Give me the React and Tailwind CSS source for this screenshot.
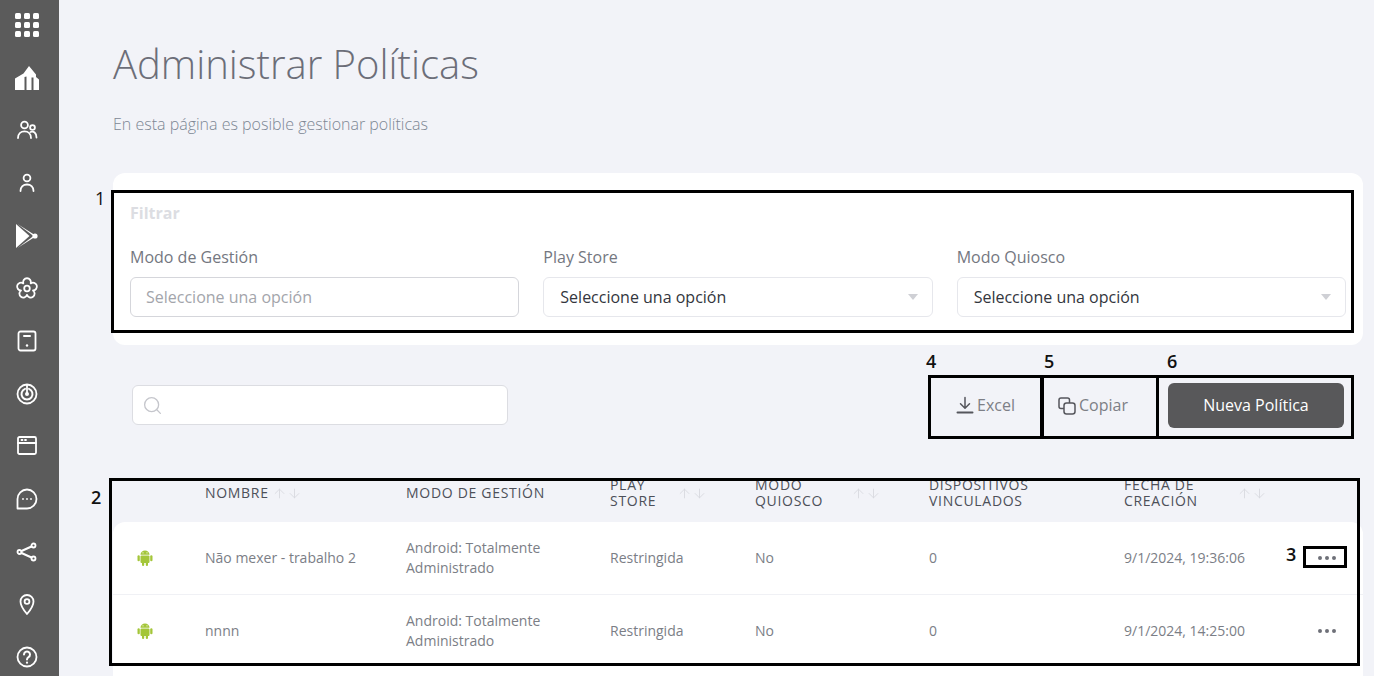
import { Search, ArrowUp, ArrowDown, MoreHorizontal } from 'lucide-react';

const gridCols = 'grid grid-cols-[92px_201px_204px_145px_174px_195px_1fr_60px]';

function IconBox({ children }) {
    return (
        <svg width="24" height="24" viewBox="0 0 24 24" fill="none" stroke="white" strokeWidth="1.8" strokeLinecap="round" strokeLinejoin="round">
            {children}
        </svg>
    );
}

function SideNav() {
    return (
        <aside className="w-[59px] h-full shrink-0 bg-[#5b5b5b] flex flex-col items-center justify-between pt-[13px] pb-[7px] pr-[5px]">
            {/* apps */}
            <svg width="24" height="24" viewBox="0 0 24 24" fill="white">
                {[0, 9, 18].map((y) => [0, 9, 18].map((x) => (
                    <rect key={`${x}-${y}`} x={x} y={y} width="6" height="6" rx="1.5" />
                )))}
            </svg>
            {/* buildings */}
            <svg width="24" height="24" viewBox="0 0 24 24" fill="white" fillRule="evenodd">
                <path d="M0 24V12.500L8.500 7.500L14 0L21 8.500V11L24 13.500V24H0ZM9.500 11V24H11.500V10.500L9.500 11ZM16.500 11.500V24H18.500V11.500H16.500Z" />
            </svg>
            <IconBox>
                <circle cx="9.500" cy="7" r="3.400" />
                <circle cx="17.500" cy="9.500" r="2.400" />
                <path d="M3 20c0-4 2.800-6.700 6.500-6.700S16 16 16 20" />
                <path d="M15.500 14c3-1.300 6 .8 6 5.500" />
            </IconBox>
            <IconBox>
                <circle cx="12" cy="7" r="3.400" />
                <path d="M5.500 20c0-4 2.800-6.500 6.500-6.500s6.500 2.500 6.500 6.500" />
            </IconBox>
            {/* play store */}
            <svg width="24" height="24" viewBox="0 0 24 24" fill="white">
                <path d="M1 0L14.500 12L1 24V0Z" />
                <path d="M2.500 0L19 10.500L17.800 11.500L2.500 0Z" />
                <path d="M2.500 24L19 13.500L17.800 12.500L2.500 24Z" />
                <circle cx="20" cy="12" r="2.600" />
            </svg>
            {/* settings flower */}
            <IconBox>
                <path d="M8.300 7.400A3.900 3.900 0 1 1 15.700 7.400A3.900 3.900 0 1 1 17.990 14.450A3.900 3.900 0 1 1 12 18.800A3.900 3.900 0 1 1 6.010 14.450A3.900 3.900 0 1 1 8.300 7.400Z" />
                <circle cx="12" cy="12.500" r="2.800" />
            </IconBox>
            {/* device */}
            <IconBox>
                <rect x="3.500" y="2.500" width="17" height="19" rx="2" />
                <path d="M9 7h6" strokeWidth="2" />
                <circle cx="12" cy="16.500" r="1.200" fill="white" stroke="none" />
            </IconBox>
            {/* radar */}
            <IconBox>
                <circle cx="12" cy="12" r="9.500" />
                <path d="M10 6.900a5.500 5.500 0 1 0 4 0" strokeWidth="2" />
                <path d="M12 3v9" strokeWidth="1.800" />
                <circle cx="12" cy="12" r="2" fill="white" stroke="none" />
            </IconBox>
            <IconBox>
                <rect x="3" y="3" width="18" height="17" rx="1.500" />
                <path d="M3 9h18" />
                <path d="M6.500 6h1M10 6h1" />
            </IconBox>
            <IconBox>
                <path d="M2.500 21.500V12a9.500 9.500 0 1 1 9.500 9.500H2.500Z" />
                <path d="M8 12h.01M12 12h.01M16 12h.01" />
            </IconBox>
            <IconBox>
                <circle cx="18.500" cy="5.500" r="2" />
                <circle cx="4.500" cy="12" r="2" />
                <circle cx="18.500" cy="18.500" r="2" />
                <path d="M6.500 11 16.500 6.500M6.500 13l10 4.500" strokeWidth="2" />
            </IconBox>
            <IconBox>
                <path d="M12 22C8.500 18 5.500 14.500 5.500 9.500a6.500 6.500 0 0 1 13 0c0 5-3 8.500-6.500 12.500Z" />
                <circle cx="12" cy="9.500" r="2.400" />
            </IconBox>
            <IconBox>
                <circle cx="12" cy="12" r="9.500" />
                <path d="M9 9.500a3 3 0 1 1 4.500 2.600c-1 .6-1.500 1.200-1.500 2.400" strokeWidth="2" />
                <path d="M12 17.700h.01" strokeWidth="2.200" />
            </IconBox>
        </aside>
    );
}

function AndroidIcon() {
    return (
        <svg width="16" height="17" viewBox="0 0 16 17" fill="#a4c639" className="-mt-[2px]">
            <path d="M3.500 5.800C3.500 3.300 5.500 1.500 8 1.500s4.500 1.800 4.500 4.300H3.500Z" />
            <rect x="3.500" y="6.500" width="9" height="7.500" rx="1" />
            <rect x="0.500" y="6.300" width="2.300" height="6" rx="1.150" />
            <rect x="13.200" y="6.300" width="2.300" height="6" rx="1.150" />
            <rect x="5" y="12" width="2.200" height="5" rx="1.100" />
            <rect x="8.800" y="12" width="2.200" height="5" rx="1.100" />
            <circle cx="6" cy="3.800" r="0.600" fill="white" />
            <circle cx="10" cy="3.800" r="0.600" fill="white" />
        </svg>
    );
}

function DownloadIcon() {
    return (
        <svg width="18" height="20" viewBox="0 0 18 20" fill="none" stroke="#55565c" strokeWidth="1.500" strokeLinecap="round" strokeLinejoin="round">
            <path d="M9 2.500V13M4.500 8.800 9 13.200l4.500-4.400" />
            <path d="M1.500 17.500h15" strokeWidth="2" />
        </svg>
    );
}

function CopyIcon() {
    return (
        <svg width="18" height="18" viewBox="0 0 18 18" fill="none" stroke="#55565c" strokeWidth="1.500" className="mt-[2px]">
            <path d="M6 11.500H3a2 2 0 0 1-2-2V3a2 2 0 0 1 2-2h6.500a2 2 0 0 1 2 2V6" />
            <rect x="6" y="6" width="11" height="11" rx="2.500" />
        </svg>
    );
}

function SortArrows() {
    return (
        <span className="inline-flex text-[#d9dae0]">
            <ArrowUp size={15} strokeWidth={1.500} />
            <ArrowDown size={15} strokeWidth={1.500} />
        </span>
    );
}

function FilterField({ label, children }) {
    return (
        <div className="flex-1 min-w-0">
            <div className="text-[16px] leading-[20px] text-[#74777f] mb-[10px]">{label}</div>
            {children}
        </div>
    );
}

function SelectBox() {
    return (
        <div className="h-[40px] px-[16px] flex items-center justify-between bg-white border border-[#e6e7ec] rounded-[6px] text-[16px] text-[#33363d]">
            <span>Seleccione una opción</span>
            <span className="w-0 h-0 border-x-[5px] border-x-transparent border-t-[6px] border-t-[#cfd0d5] -mr-[2px]"></span>
        </div>
    );
}

function HeaderCell({ children, sort, gap = 'gap-[3px]' }) {
    return (
        <div className={`flex items-center ${gap} text-[14px] leading-[16px] tracking-[0.7px] text-[#4d5059]`}>
            <span>{children}</span>
            {sort && <SortArrows />}
        </div>
    );
}

function PolicyRow({ name, date, last }) {
    return (
        <div className={`${gridCols} items-center text-[14px] leading-[20px] text-[#7b7e86] ${last ? 'h-[72px]' : 'h-[73px] border-b border-[#f0f1f5]'}`}>
            <div className="pl-[24px]"><AndroidIcon /></div>
            <div>{name}</div>
            <div>Android: Totalmente<br />Administrado</div>
            <div>Restringida</div>
            <div>No</div>
            <div>0</div>
            <div>{date}</div>
            <div className="flex justify-end pr-[24px]">
                <MoreHorizontal size={24} strokeWidth={2} className="text-[#6e7078]" />
            </div>
        </div>
    );
}

// numbered black frames drawn on top of the screenshot
function Callouts() {
    const frames = [
        'left-[111px] top-[190px] w-[1243px] h-[143px]',
        'left-[928px] top-[375px] w-[115px] h-[64px]',
        'left-[1041px] top-[375px] w-[118px] h-[64px]',
        'left-[1156px] top-[375px] w-[198px] h-[64px]',
        'left-[109px] top-[478px] w-[1251px] h-[188px]',
        'left-[1303px] top-[546px] w-[44px] h-[22px]',
    ];
    const labels = [
        ['1', 'left-[95px] top-[186px] font-normal'],
        ['2', 'left-[91px] top-[485px] font-semibold'],
        ['3', 'left-[1286px] top-[542px] font-semibold'],
        ['4', 'left-[926px] top-[349px] font-semibold'],
        ['5', 'left-[1044px] top-[349px] font-semibold'],
        ['6', 'left-[1167px] top-[349px] font-semibold'],
    ];
    return (
        <>
            {frames.map((f) => (
                <div key={f} className={`absolute border-[3px] border-black ${f}`}></div>
            ))}
            {labels.map(([n, pos]) => (
                <span key={n} className={`absolute text-[18px] leading-[25px] text-[#111] ${pos}`}>{n}</span>
            ))}
        </>
    );
}

export default function App() {
    return (
        <div className="relative flex h-[676px] w-[1374px] overflow-hidden bg-[#f2f3f8] font-['Open_Sans','Noto_Sans',sans-serif]">
            <SideNav />

            <main className="flex-1 min-w-0 pl-[54px] pr-[11px]">
                <h1 className="pt-[36px] text-[40px] leading-[56px] font-light text-[#6c6e78]">Administrar Políticas</h1>
                <p className="mt-[21px] text-[16px] leading-[22px] font-light text-[#7d8794]">En esta página es posible gestionar políticas</p>

                <section className="mt-[38px] h-[172px] bg-white rounded-[12px] px-[17px] pt-[29px]">
                    <div className="text-[16px] leading-[22px] font-bold text-[#dcdde2]">Filtrar</div>
                    <div className="flex gap-[24px] mt-[23px]">
                        <FilterField label="Modo de Gestión">
                            <div className="h-[40px] px-[15px] flex items-center bg-white border border-[#d5d6db] rounded-[6px] text-[16px] text-[#a3a5ab]">
                                Seleccione una opción
                            </div>
                        </FilterField>
                        <FilterField label="Play Store"><SelectBox /></FilterField>
                        <FilterField label="Modo Quiosco"><SelectBox /></FilterField>
                    </div>
                </section>

                <div className="flex items-center mt-[38px] h-[45px] pl-[19px] pr-[19px]">
                    <div className="w-[376px] h-[40px] -mt-[1px] flex items-center px-[9px] bg-white border border-[#dcdde2] rounded-[6px]">
                        <Search size={21} strokeWidth={1.500} className="text-[#c5c6cc]" />
                    </div>
                    <div className="ml-auto flex items-center">
                        <button className="-mt-[2px] flex items-center gap-[3px] text-[16px] text-[#7d7f86]">
                            <DownloadIcon />
                            Excel
                        </button>
                        <button className="-mt-[2px] ml-[43px] flex items-center gap-[3px] text-[16px] text-[#7d7f86]">
                            <CopyIcon />
                            Copiar
                        </button>
                        <button className="ml-[40px] w-[176px] h-[45px] pb-[2px] rounded-[6px] bg-[#58585a] text-white text-[16px]">
                            Nueva Política
                        </button>
                    </div>
                </div>

                <section className="mt-[36px]">
                    <div className={`${gridCols} h-[58px] items-center`}>
                        <div></div>
                        <HeaderCell sort>NOMBRE</HeaderCell>
                        <HeaderCell>MODO DE GESTIÓN</HeaderCell>
                        <HeaderCell sort gap="gap-[21px]">PLAY<br />STORE</HeaderCell>
                        <HeaderCell sort gap="gap-[28px]">MODO<br />QUIOSCO</HeaderCell>
                        <HeaderCell>DISPOSITIVOS<br />VINCULADOS</HeaderCell>
                        <HeaderCell sort gap="gap-[39px]">FECHA DE<br />CREACIÓN</HeaderCell>
                        <div></div>
                    </div>
                    <div className="bg-white rounded-t-[12px] h-[160px]">
                        <PolicyRow name="Não mexer - trabalho 2" date="9/1/2024, 19:36:06" />
                        <PolicyRow name="nnnn" date="9/1/2024, 14:25:00" last />
                    </div>
                </section>
            </main>

            <Callouts />
        </div>
    );
}
